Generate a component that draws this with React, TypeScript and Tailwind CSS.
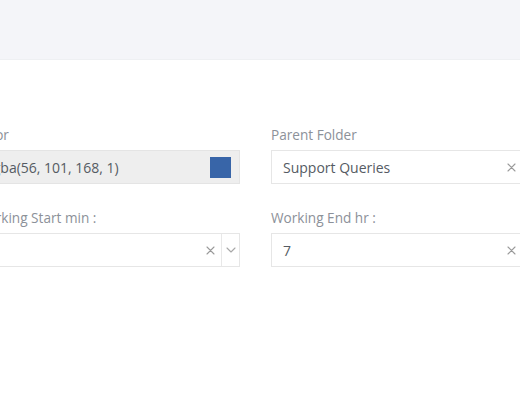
import React from "react";

const ClearIcon = () => (
  <svg width="9" height="9" viewBox="0 0 9 9" className="shrink-0">
    <path d="M1 1L8 8M8 1L1 8" stroke="#9a9a9a" strokeWidth="1.1" strokeLinecap="round" />
  </svg>
);

const Chevron = () => (
  <svg width="10" height="6" viewBox="0 0 10 6" className="shrink-0">
    <path d="M1 1L5 5L9 1" fill="none" stroke="#a8a8a8" strokeWidth="1.1" strokeLinecap="round" strokeLinejoin="round" />
  </svg>
);

interface SelectProps {
  value: string;
}

const SelectBox: React.FC<SelectProps> = ({ value }) => (
  <div className="flex h-[34px] items-stretch border border-[#e6e6e6] bg-white">
    <div className="flex flex-1 items-center pl-[11px] text-[14px] text-[#555b63]">{value}</div>
    <div className="flex w-[22px] items-center justify-center">
      <ClearIcon />
    </div>
    <div className="w-px bg-[#e8e8e8]" />
    <div className="flex w-[17px] items-center justify-center">
      <Chevron />
    </div>
  </div>
);

const Label: React.FC<{ children: React.ReactNode }> = ({ children }) => (
  <div className="mb-[5px] whitespace-nowrap text-[13.6px] leading-[20px] text-[#8c9199]">{children}</div>
);

export default function App() {
  return (
    <div
      className="h-[410px] w-[520px] overflow-hidden bg-white"
      style={{ fontFamily: '"Open Sans", "Noto Sans", sans-serif' }}
    >
      <div className="h-[60px] border-b border-[#eef0f3] bg-[#f4f5f9]" />

      <div className="-ml-[25px] grid w-[566px] grid-cols-[265px_270px] gap-x-[31px] gap-y-[24px] pt-[65px]">
        {/* Color */}
        <div>
          <Label>Color</Label>
          <div className="flex h-[34px] items-center border border-[#e4e4e4] bg-[#eeeeee] pl-[11px] pr-[8px]">
            <span className="flex-1 text-[14px] text-[#555b63]">rgba(56, 101, 168, 1)</span>
            <span className="h-[21px] w-[21px] bg-[#3865a8]" />
          </div>
        </div>

        {/* Parent Folder */}
        <div>
          <Label>Parent Folder</Label>
          <SelectBox value="Support Queries" />
        </div>

        {/* Working Start min */}
        <div>
          <Label>Working Start min :</Label>
          <SelectBox value="0" />
        </div>

        {/* Working End hr */}
        <div>
          <Label>Working End hr :</Label>
          <SelectBox value="7" />
        </div>
      </div>
    </div>
  );
}
